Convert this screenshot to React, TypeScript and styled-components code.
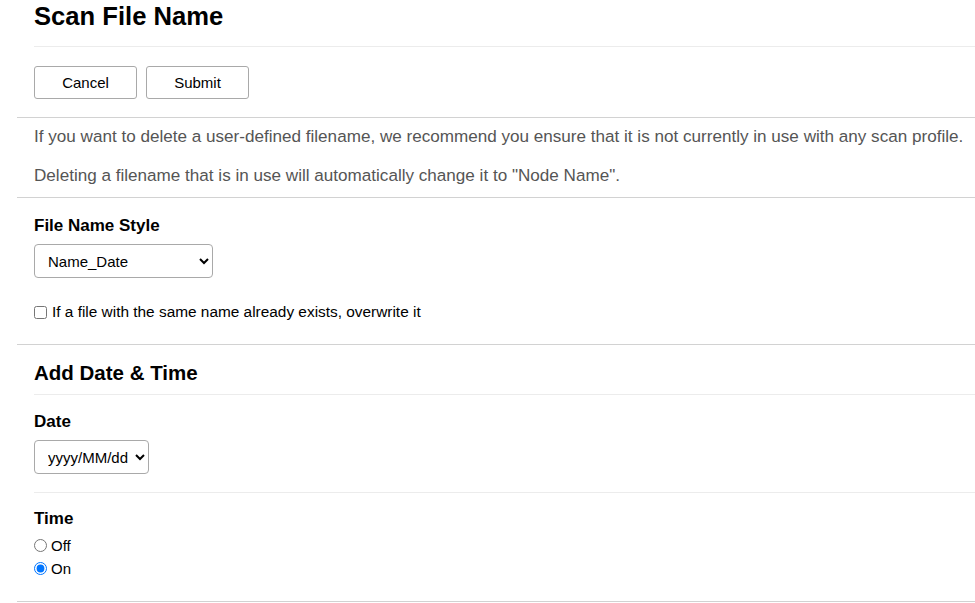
import React, { FC, useState } from "react";
import styled, { createGlobalStyle } from "styled-components";

const GlobalStyle = createGlobalStyle`
	body {
		margin: 0;
		background: #ffffff;
		font-family: "Liberation Sans", Arial, sans-serif;
		color: #000000;
	}
`;

const Page = styled.div`
	padding-left: 17px;
`;

const Section = styled.section`
	border-bottom: 1px solid #d2d2d2;
`;

const Inner = styled.div<{ top?: number; bottom?: number; rule?: boolean }>`
	margin-left: 17px;
	padding-top: ${(props) => props.top ?? 0}px;
	padding-bottom: ${(props) => props.bottom ?? 0}px;
	border-bottom: ${(props) => (props.rule ? "1px solid #ececec" : "none")};
`;

const Title = styled.h1`
	margin: 0;
	font-size: 25.6px;
	line-height: 30px;
	font-weight: 700;
	color: #000000;
`;

const SubTitle = styled.h2`
	margin: 0;
	font-size: 20.5px;
	line-height: 24px;
	font-weight: 700;
`;

const ButtonRow = styled.div`
	display: flex;
	gap: 9px;
`;

const Button = styled.button`
	width: 103px;
	height: 33px;
	background: #ffffff;
	border: 1px solid #a9a9a9;
	border-radius: 3px;
	font-family: "Liberation Sans", Arial, sans-serif;
	font-size: 15px;
	color: #000000;
	cursor: pointer;
`;

const Note = styled.p`
	margin: 0;
	font-size: 17.1px;
	line-height: 20px;
	color: #555555;

	& + & {
		margin-top: 19px;
	}
`;

const FieldLabel = styled.div`
	font-size: 17px;
	line-height: 20px;
	font-weight: 700;
`;

const Select = styled.select<{ width: number }>`
	display: block;
	margin-top: 8px;
	width: ${(props) => props.width}px;
	height: 34px;
	padding: 0 2px 0 9px;
	border: 1px solid #a9a9a9;
	border-radius: 4px;
	background: #ffffff;
	font-family: "Liberation Sans", Arial, sans-serif;
	font-size: 15px;
	color: #000000;
`;

const CheckRow = styled.label`
	display: flex;
	align-items: center;
	margin-top: 25px;
	font-size: 15.4px;
	line-height: 18px;

	input {
		margin: 0 5px 0 0;
		width: 13px;
		height: 13px;
	}
`;

const RadioGroup = styled.div`
	margin-top: 5px;
	display: flex;
	flex-direction: column;
`;

const RadioRow = styled.label`
	display: flex;
	align-items: center;
	height: 23px;
	font-size: 15px;

	input {
		margin: 0 4px 0 0;
		width: 13px;
		height: 13px;
	}
`;

const App: FC = () => {
	const [style, setStyle] = useState("Name_Date");
	const [dateFormat, setDateFormat] = useState("yyyy/MM/dd");
	const [overwrite, setOverwrite] = useState(false);
	const [time, setTime] = useState("on");

	return (
		<>
			<GlobalStyle />
			<Page>
				<Section>
					<Inner top={1} bottom={15} rule>
						<Title>Scan File Name</Title>
					</Inner>
					<Inner top={19} bottom={18}>
						<ButtonRow>
							<Button type="button">Cancel</Button>
							<Button type="submit">Submit</Button>
						</ButtonRow>
					</Inner>
				</Section>

				<Section>
					<Inner top={9} bottom={11}>
						<Note>
							If you want to delete a user-defined filename, we recommend you
							ensure that it is not currently in use with any scan profile.
						</Note>
						<Note>
							Deleting a filename that is in use will automatically change it
							to "Node Name".
						</Note>
					</Inner>
				</Section>

				<Section>
					<Inner top={18} bottom={23}>
						<FieldLabel>File Name Style</FieldLabel>
						<Select
							width={179}
							value={style}
							onChange={({ target }) => setStyle(target.value)}
						>
							<option>Name_Date</option>
							<option>Name_Number</option>
							<option>Name_Date_Number</option>
						</Select>
						<CheckRow>
							<input
								type="checkbox"
								checked={overwrite}
								onChange={({ target }) => setOverwrite(target.checked)}
							/>
							If a file with the same name already exists, overwrite it
						</CheckRow>
					</Inner>
				</Section>

				<Section>
					<Inner top={16} bottom={9} rule>
						<SubTitle>Add Date &amp; Time</SubTitle>
					</Inner>
					<Inner top={17} bottom={18} rule>
						<FieldLabel>Date</FieldLabel>
						<Select
							width={115}
							value={dateFormat}
							onChange={({ target }) => setDateFormat(target.value)}
						>
							<option>yyyy/MM/dd</option>
							<option>MM/dd/yyyy</option>
							<option>dd/MM/yyyy</option>
						</Select>
					</Inner>
					<Inner top={16} bottom={21}>
						<FieldLabel>Time</FieldLabel>
						<RadioGroup>
							<RadioRow>
								<input
									type="radio"
									name="time"
									checked={time === "off"}
									onChange={() => setTime("off")}
								/>
								Off
							</RadioRow>
							<RadioRow>
								<input
									type="radio"
									name="time"
									checked={time === "on"}
									onChange={() => setTime("on")}
								/>
								On
							</RadioRow>
						</RadioGroup>
					</Inner>
				</Section>
			</Page>
		</>
	);
};

export default App;
